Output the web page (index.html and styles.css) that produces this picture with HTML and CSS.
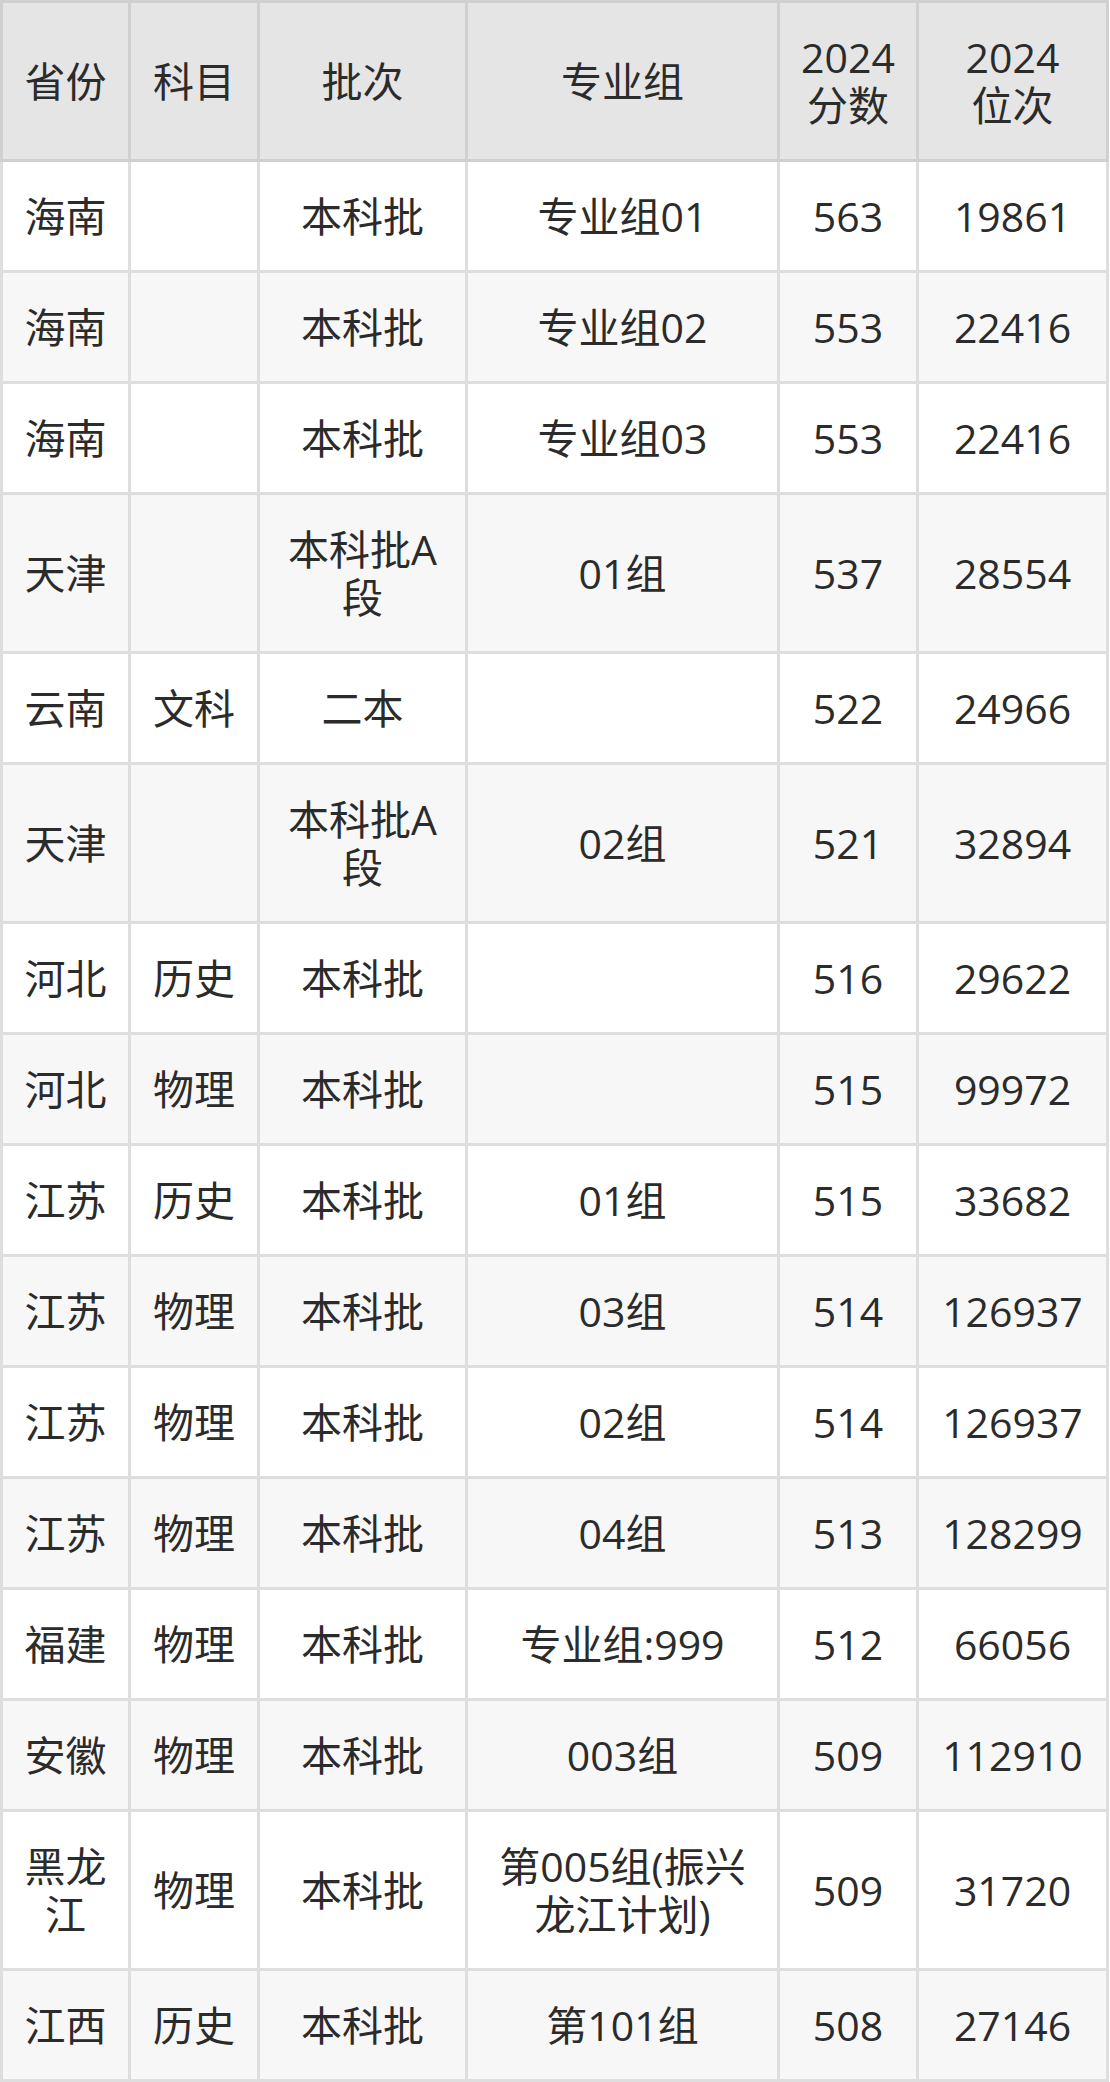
FILE: index.html
```html
<!DOCTYPE html>
<html lang="zh-CN">
<head>
<meta charset="utf-8">
<title>2024 分数位次</title>
<link rel="stylesheet" href="styles.css">
</head>
<body>
<table class="score-table">
  <colgroup>
    <col class="c-prov">
    <col class="c-subj">
    <col class="c-batch">
    <col class="c-group">
    <col class="c-score">
    <col class="c-rank">
  </colgroup>
  <thead>
    <tr><th>省份</th><th>科目</th><th>批次</th><th>专业组</th><th>2024<br>分数</th><th>2024<br>位次</th></tr>
  </thead>
  <tbody>
    <tr><td>海南</td><td></td><td>本科批</td><td>专业组01</td><td>563</td><td>19861</td></tr>
    <tr><td>海南</td><td></td><td>本科批</td><td>专业组02</td><td>553</td><td>22416</td></tr>
    <tr><td>海南</td><td></td><td>本科批</td><td>专业组03</td><td>553</td><td>22416</td></tr>
    <tr><td>天津</td><td></td><td>本科批A段</td><td>01组</td><td>537</td><td>28554</td></tr>
    <tr><td>云南</td><td>文科</td><td>二本</td><td></td><td>522</td><td>24966</td></tr>
    <tr><td>天津</td><td></td><td>本科批A段</td><td>02组</td><td>521</td><td>32894</td></tr>
    <tr><td>河北</td><td>历史</td><td>本科批</td><td></td><td>516</td><td>29622</td></tr>
    <tr><td>河北</td><td>物理</td><td>本科批</td><td></td><td>515</td><td>99972</td></tr>
    <tr><td>江苏</td><td>历史</td><td>本科批</td><td>01组</td><td>515</td><td>33682</td></tr>
    <tr><td>江苏</td><td>物理</td><td>本科批</td><td>03组</td><td>514</td><td>126937</td></tr>
    <tr><td>江苏</td><td>物理</td><td>本科批</td><td>02组</td><td>514</td><td>126937</td></tr>
    <tr><td>江苏</td><td>物理</td><td>本科批</td><td>04组</td><td>513</td><td>128299</td></tr>
    <tr><td>福建</td><td>物理</td><td>本科批</td><td>专业组:999</td><td>512</td><td>66056</td></tr>
    <tr><td>安徽</td><td>物理</td><td>本科批</td><td>003组</td><td>509</td><td>112910</td></tr>
    <tr><td>黑龙江</td><td>物理</td><td>本科批</td><td>第005组(振兴龙江计划)</td><td>509</td><td>31720</td></tr>
    <tr><td>江西</td><td>历史</td><td>本科批</td><td>第101组</td><td>508</td><td>27146</td></tr>
  </tbody>
</table>
</body>
</html>
```

FILE: styles.css
```css
html, body {
  margin: 0;
  padding: 0;
  background: #ffffff;
}

.score-table {
  border-collapse: collapse;
  table-layout: fixed;
  width: 1109px;
  font-family: "Open Sans", "Noto Sans CJK SC", sans-serif;
  font-size: 41px;
  line-height: 48px;
  color: #2b2b2b;
}

.c-prov { width: 128px; }
.c-subj { width: 129px; }
.c-batch { width: 208px; }
.c-group { width: 312px; }
.c-score { width: 139px; }
.c-rank { width: 190px; }

.score-table th,
.score-table td {
  padding: 30px 18px;
  text-align: center;
  vertical-align: middle;
  word-break: break-all;
}

.score-table th {
  font-weight: normal;
  background: #e5e5e5;
  border: 3px solid #d0d0d0;
}

.score-table td {
  border: 3px solid #dedede;
}

.score-table tbody tr:nth-child(odd) td {
  background: #ffffff;
}

.score-table tbody tr:nth-child(even) td {
  background: #f7f7f7;
}
```
